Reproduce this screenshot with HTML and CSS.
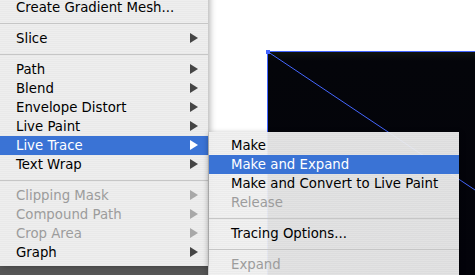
FILE: index.html
```html
<!DOCTYPE html>
<html lang="en">

<head>
    <meta charset="UTF-8" />
    <title>Object Menu - Live Trace</title>
    <link rel="stylesheet" href="styles.css">
</head>

<body>
    <ul class="menu main-menu">
        <li class="item">Create Gradient Mesh...</li>
        <li class="sep"></li>
        <li class="item">Slice<span class="arrow"></span></li>
        <li class="sep"></li>
        <li class="item">Path<span class="arrow"></span></li>
        <li class="item">Blend<span class="arrow"></span></li>
        <li class="item">Envelope Distort<span class="arrow"></span></li>
        <li class="item">Live Paint<span class="arrow"></span></li>
        <li class="item active">Live Trace<span class="arrow"></span></li>
        <li class="item">Text Wrap<span class="arrow"></span></li>
        <li class="sep"></li>
        <li class="item disabled">Clipping Mask<span class="arrow"></span></li>
        <li class="item disabled">Compound Path<span class="arrow"></span></li>
        <li class="item disabled">Crop Area<span class="arrow"></span></li>
        <li class="item">Graph<span class="arrow"></span></li>
    </ul>

    <div class="canvas">
        <svg class="artboard" width="267" height="275" viewBox="0 0 267 275">
            <defs>
                <linearGradient id="fill" x1="0" y1="0" x2="0" y2="1">
                    <stop offset="0" stop-color="#0e130d" />
                    <stop offset="0.04" stop-color="#04050a" />
                    <stop offset="1" stop-color="#03030a" />
                </linearGradient>
            </defs>
            <rect x="60" y="52" width="207" height="223" fill="url(#fill)" />
            <line x1="59.5" y1="51.5" x2="267" y2="51.5" stroke="#4466ff" stroke-width="1" />
            <line x1="59.5" y1="51.5" x2="59.5" y2="275" stroke="#4466ff" stroke-width="1" />
            <line x1="59.5" y1="51.5" x2="267" y2="190" stroke="#4466ff" stroke-width="1" />
            <rect x="58" y="50" width="4" height="4" fill="#4466ff" />
        </svg>
    </div>

    <ul class="menu sub-menu">
        <li class="item">Make</li>
        <li class="item active">Make and Expand</li>
        <li class="item">Make and Convert to Live Paint</li>
        <li class="item disabled">Release</li>
        <li class="sep"></li>
        <li class="item">Tracing Options...</li>
        <li class="sep"></li>
        <li class="item disabled">Expand</li>
    </ul>
</body>

</html>
```

FILE: styles.css
```css
* {
    margin: 0;
    padding: 0;
    box-sizing: border-box;
}

body {
    font-family: 'DejaVu Sans', 'Verdana', sans-serif;
    font-size: 13.3px;
    background: #565656;
    display: flex;
    align-items: flex-start;
    height: 275px;
    overflow: hidden;
    position: relative;
}

/* Menus */
.menu {
    list-style: none;
    padding: 4px 0;
    background: repeating-linear-gradient(180deg, #eeeeee 0 1px, #e9e9e9 1px 2px);
}

.main-menu {
    width: 208px;
    margin-top: -6px;
    position: relative;
    z-index: 1;
    box-shadow: 2px 0 6px rgba(0, 0, 0, 0.3);
}

.sub-menu {
    position: absolute;
    top: 132px;
    left: 209px;
    width: 250px;
    z-index: 2;
    background: repeating-linear-gradient(180deg, rgba(240, 240, 240, 0.94) 0 1px, rgba(234, 234, 234, 0.94) 1px 2px);
    box-shadow: 0 2px 6px rgba(0, 0, 0, 0.4);
}

.item {
    display: flex;
    align-items: center;
    justify-content: space-between;
    height: 19px;
    line-height: 19px;
    padding: 0 10px 0 16px;
    color: #000;
    white-space: nowrap;
}

.sub-menu .item {
    padding-left: 22px;
}

.item.active {
    background: #3a73d5;
    color: #fff;
}

.item.disabled {
    color: #9c9c9c;
}

.sep {
    height: 12px;
    display: flex;
    align-items: center;
}

.sep::before {
    content: '';
    flex: 1;
    height: 1px;
    background: #c6c6c6;
}

.arrow {
    width: 0;
    height: 0;
    border-top: 5px solid transparent;
    border-bottom: 5px solid transparent;
    border-left: 8px solid #454545;
    margin-top: -1px;
}

.active .arrow {
    border-left-color: #fff;
}

.disabled .arrow {
    border-left-color: #a8a8a8;
}

/* Artboard */
.canvas {
    flex: 1;
    height: 275px;
    background: #fff;
}

.artboard {
    display: block;
}
```
